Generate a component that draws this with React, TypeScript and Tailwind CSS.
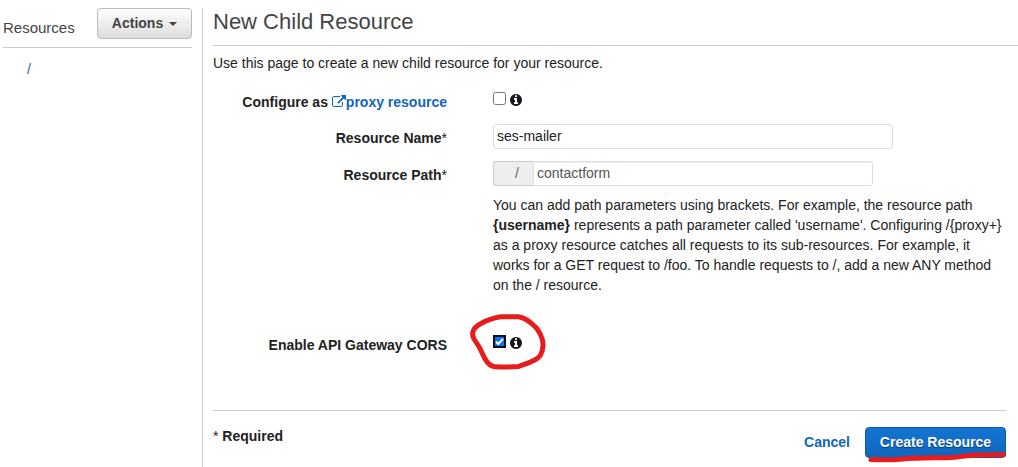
import React from "react";

function InfoIcon() {
  return (
    <svg className="h-3 w-3 fill-[#16191f]" viewBox="128 128 1536 1536">
      <path d="M1152 1376v-160q0-14-9-23t-23-9h-96v-512q0-14-9-23t-23-9h-320q-14 0-23 9t-9 23v160q0 14 9 23t23 9h96v320h-96q-14 0-23 9t-9 23v160q0 14 9 23t23 9h448q14 0 23-9t9-23zm-128-896v-160q0-14-9-23t-23-9h-192q-14 0-23 9t-9 23v160q0 14 9 23t23 9h192q14 0 23-9t9-23zm640 416q0 209-103 385.5t-279.5 279.5-385.5 103-385.5-103-279.5-279.5-103-385.5 103-385.5 279.5-279.5 385.5-103 385.5 103 279.5 279.5 103 385.5z" />
    </svg>
  );
}

function ExternalLinkIcon() {
  return (
    <svg className="mb-0.5 h-3 w-3.5 shrink-0 fill-[#1166bb]" viewBox="0 0 1792 1536">
      <path d="M1408 928v320q0 119-84.5 203.5t-203.5 84.5h-832q-119 0-203.5-84.5t-84.5-203.5v-832q0-119 84.5-203.5t203.5-84.5h704q14 0 23 9t9 23v64q0 14-9 23t-23 9h-704q-66 0-113 47t-47 113v832q0 66 47 113t113 47h832q66 0 113-47t47-113v-320q0-14 9-23t23-9h64q14 0 23 9t9 23zm384-864v512q0 26-19 45t-45 19-45-19l-176-176-652 652q-10 10-23 10t-23-10l-114-114q-10-10-10-23t10-23l652-652-176-176q-19-19-19-45t19-45 45-19h512q26 0 45 19t19 45z" />
    </svg>
  );
}

function Label({ children }: { children: React.ReactNode }) {
  return (
    <div className="flex w-[234px] shrink-0 items-center justify-end font-bold whitespace-pre">
      {children}
    </div>
  );
}

export default function App() {
  return (
    <div className="flex h-[467px] w-[1018px] overflow-hidden bg-white font-['Liberation_Sans',Arial,sans-serif] text-[14px] leading-5 text-[#222]">
      <aside className="w-[202px] shrink-0 pt-2 pl-[3px]">
        <div className="flex h-10 w-[189px] justify-between border-b border-[#ccc]">
          <h2 className="pt-[10px] text-[15px] leading-5 text-[#444]">Resources</h2>
          <button className="flex h-[31px] w-[95px] items-center justify-center gap-[6px] rounded-[4px] border border-[#bbb] bg-linear-to-b from-white to-[#ddd] pb-0.5 font-bold text-[#444]">
            Actions
            <span className="mt-0.5 border-x-4 border-t-4 border-x-transparent border-t-[#444]" />
          </button>
        </div>
        <div className="pt-[11px] pl-6 text-[#1166bb]">/</div>
      </aside>

      <main className="mt-2 flex-1 border-l border-[#ccc] pl-[10px]">
        <h1 className="h-[38px] border-b border-[#ccc] text-[22px] leading-[27px] text-[#444]">
          New Child Resource
        </h1>
        <p className="mt-[7px]">Use this page to create a new child resource for your resource.</p>

        <div className="mt-[19px] flex h-5 gap-[46px]">
          <Label>
            Configure as <ExternalLinkIcon />
            <span className="text-[#1166bb]">proxy resource</span>
          </Label>
          <div className="flex items-start gap-1">
            <input type="checkbox" className="m-0 h-[13px] w-[13px]" />
            <span className="pt-0.5"><InfoIcon /></span>
          </div>
        </div>

        <div className="mt-3 flex h-[25px] gap-[46px]">
          <div className="flex pt-0.5">
            <Label>Resource Name<span className="font-normal">*</span></Label>
          </div>
          <input
            defaultValue="ses-mailer"
            className="h-[25px] w-[400px] rounded-[3px] border border-[#ddd] px-[3px] pb-0.5 text-[#222] outline-none"
          />
        </div>

        <div className="mt-3 flex h-[25px] gap-[46px]">
          <div className="flex pt-0.5">
            <Label>Resource Path<span className="font-normal">*</span></Label>
          </div>
          <div className="flex">
            <span className="flex w-10 items-center rounded-l-[3px] border border-r-0 border-[#ccc] bg-[#eee] pb-0.5 pl-[21px] text-[#666]">/</span>
            <input
              defaultValue="contactform"
              className="h-[25px] w-[340px] rounded-r-[3px] border border-[#ddd] px-[3px] pb-0.5 text-[#555] shadow-[inset_0_1px_1px_rgba(0,0,0,0.07)] outline-none"
            />
          </div>
        </div>

        <p className="mt-[9px] ml-[280px] whitespace-nowrap">
          You can add path parameters using brackets. For example, the resource path<br />
          <b>{"{username}"}</b> represents a path parameter called 'username'. Configuring /{"{proxy+}"}<br />
          as a proxy resource catches all requests to its sub-resources. For example, it<br />
          works for a GET request to /foo. To handle requests to /, add a new ANY method<br />
          on the / resource.
        </p>

        <div className="mt-10 flex h-5 gap-[46px]">
          <Label>Enable API Gateway CORS</Label>
          <div className="relative flex items-start gap-1">
            <input
              type="checkbox"
              defaultChecked
              className="m-0 h-[13px] w-[13px] appearance-none border-2 border-[#101010] bg-[#0a75ff]"
            />
            <svg
              className="pointer-events-none absolute top-0 left-0 h-[13px] w-[13px] fill-none stroke-white stroke-2"
              viewBox="0 0 13 13"
            >
              <path d="M3 6.7L5.3 9L10 3.8" />
            </svg>
            <span className="pt-0.5"><InfoIcon /></span>
            <svg
              className="pointer-events-none absolute -top-[25px] -left-[28px] h-[66px] w-[86px] fill-none stroke-[#e81c1c] stroke-[5]"
              viewBox="465 310 86 66"
              strokeLinejoin="round"
            >
              <path d="M472.8 332C474 328 477 325.500 481 323.500Q491 318 501 316.800L518.500 316.800C524 317.300 530 321.500 536.500 328Q541 334 542.500 340C543.500 345 543.300 350 540.500 355C538 360 529 362.500 518.500 366.500Q506 367.500 495 366.700C490 366.500 487.500 363.500 484.500 358L479.500 347.500L474 339Q472 335.500 472.800 332Z" />
            </svg>
          </div>
        </div>

        <div className="mt-[55px] flex w-[793px] justify-between border-t border-[#ccc] pt-4">
          <div className="-mt-px">* <b>Required</b></div>
          <div className="flex gap-[15px] font-bold">
            <button className="h-[31px] pb-0.5 text-[#1166bb]">Cancel</button>
            <button className="relative h-[31px] w-[141px] rounded-[4px] border border-[#0f5aa5] bg-linear-to-b from-[#1475d4] to-[#1166bb] pb-0.5 text-white [text-shadow:0_1px_1px_#0a3b6d]">
              Create Resource
              <svg
                className="absolute top-[23px] left-0 h-[14px] w-[144px] fill-none stroke-[#e81c1c] stroke-[5]"
                viewBox="866 451 144 14"
                strokeLinecap="round"
              >
                <path d="M871 459.500C885 460.200 895 459.800 903 459C915 457.300 935 458 952 457.500C963 456.500 970 455 980 455L1003.500 454.800" />
              </svg>
            </button>
          </div>
        </div>
      </main>
    </div>
  );
}
